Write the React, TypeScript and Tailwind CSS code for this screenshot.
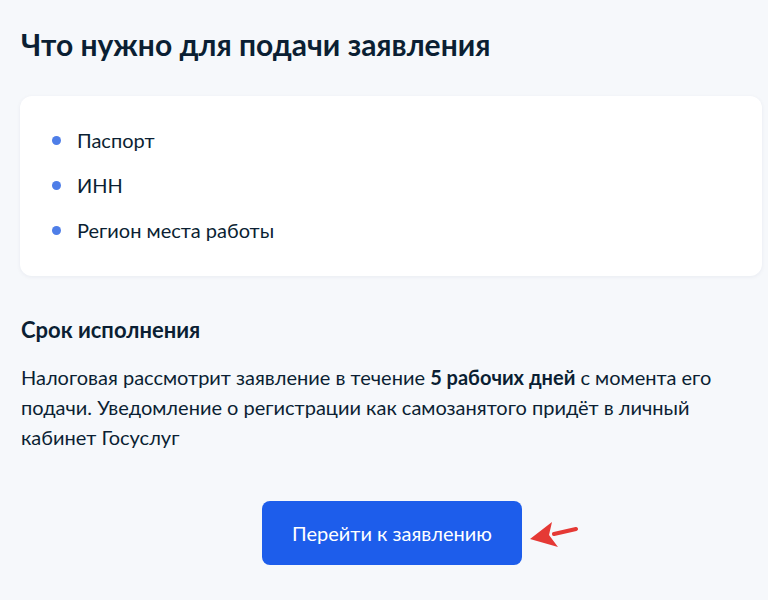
import React from "react";

const items = ["Паспорт", "ИНН", "Регион места работы"];

// ── Red pointer arrow next to the button ─────────────────────────────────────
function Arrow() {
  return (
    <svg width="50" height="30" viewBox="0 0 50 30" className="shrink-0">
      <path d="M48 7 L26 12" stroke="#e53935" strokeWidth="4" strokeLinecap="round" />
      <path d="M2 17 L24 0 L21 13 L30 25 Z" fill="#e53935" />
    </svg>
  );
}

export default function App() {
  return (
    <div
      className="min-h-[600px] bg-[#f6f8fb] pl-5 pr-[6px] pt-[26px] text-[#0b1f33]"
      style={{ fontFamily: "Lato, 'Noto Sans', sans-serif" }}
    >
      <h1 className="text-[30px] font-bold leading-9 pl-px">Что нужно для подачи заявления</h1>

      {/* Documents card */}
      <div className="mt-[34px] rounded-xl bg-white px-[32px] pt-[31px] pb-[33px] shadow-[0_1px_4px_rgba(0,30,80,0.06)]">
        <ul className="flex flex-col gap-[19px]">
          {items.map((t) => (
            <li key={t} className="flex items-center gap-[16px] text-[20px] leading-[26px]">
              <span className="h-[9px] w-[9px] rounded-full bg-[#4e7ee8]" />
              {t}
            </li>
          ))}
        </ul>
      </div>

      {/* Deadline */}
      <h2 className="mt-[40px] text-[22px] font-bold leading-7 pl-px">Срок исполнения</h2>
      <p className="mt-[18px] max-w-[720px] text-[20px] leading-[30px] pl-px">
        Налоговая рассмотрит заявление в течение <b>5 рабочих дней</b> с момента его подачи. Уведомление о
        регистрации как самозанятого придёт в личный кабинет Госуслуг
      </p>

      <div className="mt-[49px] flex items-center justify-center pl-[58px]">
        <button className="h-16 w-[260px] rounded-lg bg-[#1d5deb] text-[20px] text-white">
          Перейти к заявлению
        </button>
        <div className="ml-[6px] mt-2">
          <Arrow />
        </div>
      </div>
    </div>
  );
}
